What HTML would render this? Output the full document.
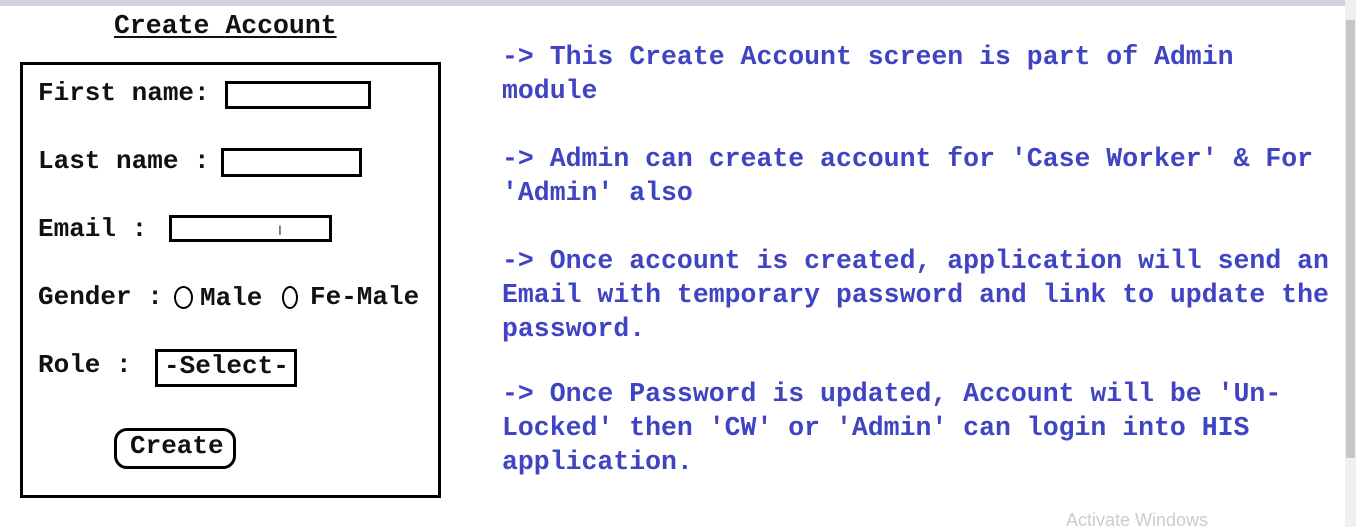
<!DOCTYPE html>
<html><head><style>
body{margin:0;width:1356px;height:527px;background:#fff;position:relative;overflow:hidden;font-family:"Liberation Mono",monospace;font-weight:bold;}
.t{position:absolute;white-space:pre;font-size:26.5px;line-height:34px;}
.k{color:#111;font-size:26px;}
.b{color:#3f45c2;}
.box{position:absolute;border:3px solid #000;box-sizing:border-box;}
</style></head><body>
<div style="position:absolute;left:0;top:0;width:1345px;height:6px;background:#cfd3de"></div>
<div style="position:absolute;left:1345px;top:0;width:11px;height:527px;background:#f0f0f0"></div>
<div style="position:absolute;left:1346px;top:20px;width:9px;height:438px;background:#c6c6c6"></div>
<div class="t k" style="left:114px;top:9px;font-size:26.5px;text-decoration:underline;text-underline-offset:3px;">Create Account</div>
<div class="box" style="left:20px;top:62px;width:421px;height:436px"></div>
<div class="t k" style="left:38px;top:76px">First name:</div>
<div class="box" style="left:225px;top:81px;width:146px;height:28px"></div>
<div class="t k" style="left:38px;top:144px">Last name :</div>
<div class="box" style="left:221px;top:148px;width:141px;height:29px"></div>
<div class="t k" style="left:38px;top:212px">Email :</div>
<div class="box" style="left:169px;top:215px;width:163px;height:27px"></div>
<div style="position:absolute;left:278px;top:222px;font:14px 'Liberation Sans';color:#444">I</div>
<div class="t k" style="left:38px;top:280px">Gender :</div>
<div class="box" style="left:174px;top:286px;width:19px;height:23px;border-width:2px;border-radius:50%"></div>
<div class="t k" style="left:200px;top:281px">Male</div>
<div class="box" style="left:282px;top:286px;width:16px;height:23px;border-width:2px;border-radius:50%"></div>
<div class="t k" style="left:310px;top:280px">Fe-Male</div>
<div class="t k" style="left:38px;top:348px">Role :</div>
<div class="box" style="left:155px;top:349px;width:142px;height:38px"></div>
<div class="t k" style="left:164px;top:349px">-Select-</div>
<div class="box" style="left:114px;top:428px;width:122px;height:41px;border-radius:13px"></div>
<div class="t k" style="left:130px;top:429px">Create</div>
<div class="t b" style="left:502px;top:40px">-&gt; This Create Account screen is part of Admin
module

-&gt; Admin can create account for 'Case Worker' &amp; For
'Admin' also

-&gt; Once account is created, application will send an
Email with temporary password and link to update the
password.</div>
<div class="t b" style="left:502px;top:377px">-&gt; Once Password is updated, Account will be 'Un-
Locked' then 'CW' or 'Admin' can login into HIS
application.</div>
<div style="position:absolute;left:1066px;top:510px;font:18px 'Liberation Sans';color:#ccc">Activate Windows</div>
</body></html>
